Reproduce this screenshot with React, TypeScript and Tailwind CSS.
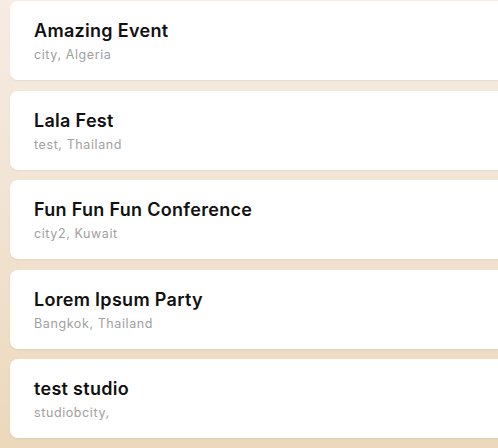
const events = [
  { name: "Amazing Event", place: "city, Algeria" },
  { name: "Lala Fest", place: "test, Thailand" },
  { name: "Fun Fun Fun Conference", place: "city2, Kuwait" },
  { name: "Lorem Ipsum Party", place: "Bangkok, Thailand" },
  { name: "test studio", place: "studiobcity," },
];

export default function App() {
  return (
    <div
      className="h-screen w-full overflow-hidden bg-gradient-to-b from-[#f6ece4] via-[#f1e3d2] to-[#ecd8ba] pt-px pl-[10px]"
      style={{ fontFamily: "Inter, 'Noto Sans', sans-serif" }}
    >
      <div className="flex w-[520px] flex-col gap-[10.5px]">
        {events.map((e) => (
          <div
            key={e.name}
            className="h-[79px] rounded-lg bg-white px-6 pt-4 shadow-[0_1px_2px_rgba(0,0,0,0.06)]"
          >
            <div className="text-lg leading-7 font-semibold tracking-[0.3px] text-[#111111]">{e.name}</div>
            <div className="mt-0.5 text-[12.5px] leading-4 tracking-[0.6px] text-[#a0a0a0]">{e.place}</div>
          </div>
        ))}
      </div>
    </div>
  );
}
